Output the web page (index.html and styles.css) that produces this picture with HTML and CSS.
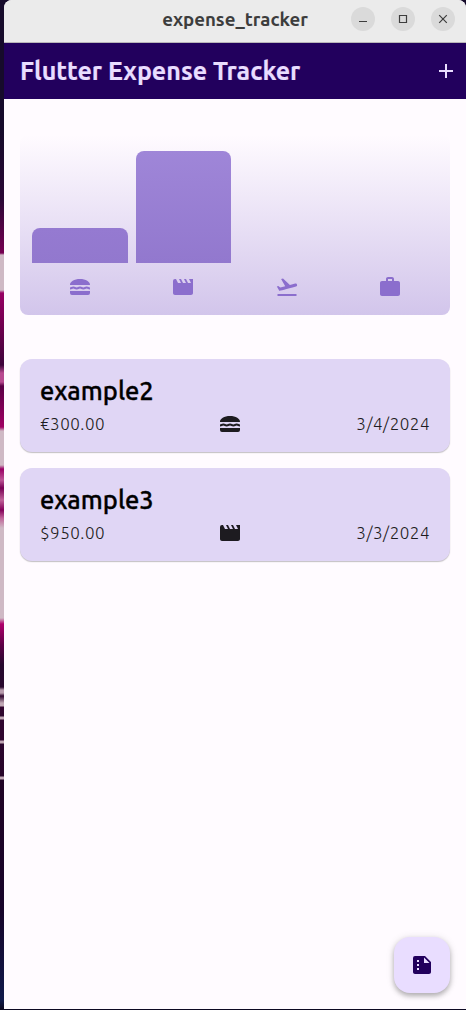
FILE: index.html
```html
<!DOCTYPE html>
<html lang="en">
<head>
<meta charset="utf-8">
<title>expense_tracker</title>
<link rel="stylesheet" href="styles.css">
</head>
<body>
<svg class="symbols" width="0" height="0">
  <symbol id="burger" viewBox="0 0 24 24"><path d="M22 10C22.3 6.7 17.7 4 12 4S1.700 6.700 2 10zM2 16h20v2a2 2 0 0 1-2 2H4a2 2 0 0 1-2-2zM18.660 11.500c-1.950 0-2.090 1-3.330 1-1.190 0-1.420-1-3.330-1-1.950 0-2.090 1-3.330 1-1.190 0-1.420-1-3.330-1-1.950 0-2.100 1-3.340 1v2c1.900 0 2.170-1 3.350-1 1.190 0 1.420 1 3.330 1 1.950 0 2.090-1 3.330-1s1.420 1 3.330 1c1.950 0 2.090-1 3.330-1 1.190 0 1.400.98 3.310 1v-2c-1.220 0-1.400-1-3.320-1z"/></symbol>
  <symbol id="movie" viewBox="0 0 24 24"><path d="M18 4l2 4h-3l-2-4h-2l2 4h-3l-2-4H8l2 4H7L5 4H4a2 2 0 0 0-2 2v12c0 1.100.9 2 2 2h16c1.100 0 2-.9 2-2V4z"/></symbol>
  <symbol id="flight" viewBox="0 0 24 24"><path d="M2.500 19h19v2h-19zm19.570-9.360c-.21-.8-1.040-1.280-1.840-1.060L14.920 10l-6.900-6.430-1.930.51 4.140 7.170-4.970 1.330-1.970-1.540-1.450.39 2.590 4.490s7.120-1.900 16.570-4.430c.81-.23 1.280-1.050 1.070-1.850z"/></symbol>
  <symbol id="work" viewBox="0 0 24 24"><path d="M20 6h-4V4c0-1.110-.89-2-2-2h-4c-1.110 0-2 .89-2 2v2H4c-1.110 0-2 .89-2 2v11c0 1.110.89 2 2 2h16c1.110 0 2-.89 2-2V8c0-1.110-.89-2-2-2zm-6 0h-4V4h4z"/></symbol>
  <symbol id="summary" viewBox="0 0 24 24"><path fill-rule="evenodd" d="M15 3H5a2 2 0 0 0-2 2v14c0 1.100.9 2 2 2h14c1.100 0 2-.9 2-2V9zM7 7h2v2H7zm0 4h2v2H7zm0 4h2v2H7zm7-5V4.500l5.500 5.500z"/></symbol>
</svg>
<div class="window">
  <header class="titlebar">
    <span class="window-name">expense_tracker</span>
    <div class="controls">
      <span class="control"><svg viewBox="0 0 24 24"><path d="M8 14.500h8"/></svg></span>
      <span class="control"><svg viewBox="0 0 24 24"><path d="M8.500 8.500h7v7h-7z"/></svg></span>
      <span class="control"><svg viewBox="0 0 24 24"><path d="M8.200 8.200l7.600 7.600M15.800 8.200l-7.600 7.600"/></svg></span>
    </div>
  </header>
  <div class="appbar">
    <h1 class="app-title">Flutter Expense Tracker</h1>
    <svg class="add" viewBox="0 0 24 24"><path d="M19 13h-6v6h-2v-6H5v-2h6V5h2v6h6z"/></svg>
  </div>
  <main class="content">
    <section class="chart">
      <div class="bars">
        <div class="slot"><div class="bar bar-food"></div></div>
        <div class="slot"><div class="bar bar-leisure"></div></div>
        <div class="slot"></div>
        <div class="slot"></div>
      </div>
      <div class="categories">
        <svg class="icon"><use href="#burger"/></svg>
        <svg class="icon"><use href="#movie"/></svg>
        <svg class="icon"><use href="#flight"/></svg>
        <svg class="icon"><use href="#work"/></svg>
      </div>
    </section>
    <section class="list">
      <article class="card">
        <h2 class="name">example2</h2>
        <div class="details"><span class="amount">€300.00</span><svg class="icon"><use href="#burger"/></svg><span class="date">3/4/2024</span></div>
      </article>
      <article class="card">
        <h2 class="name">example3</h2>
        <div class="details"><span class="amount">$950.00</span><svg class="icon"><use href="#movie"/></svg><span class="date">3/3/2024</span></div>
      </article>
    </section>
  </main>
  <button class="fab"><svg class="icon"><use href="#summary"/></svg></button>
</div>
</body>
</html>
```
FILE: styles.css
```css
* { box-sizing: border-box; }
body {
  margin: 0;
  width: 466px;
  height: 1010px;
  padding: 0 0 1px 4px;
  overflow: hidden;
  font-family: Ubuntu, "Noto Sans", "Open Sans", sans-serif;
  background: linear-gradient(#160b2b 0, #160b2b 130px, #2b0836 200px, #760052 253px, #cfb9c5 255px, #cfb9c5 290px, #970063 293px, #720050 325px, #3d043b 365px, #b84a90 373px, #b84a90 382px, #5a0046 386px, #a00063 427px, #cfb9c5 431px, #cfb9c5 465px, #9a0065 469px, #bd5596 480px, #790055 488px, #c06299 500px, #84005a 510px, #c06299 518px, #cfb9c5 528px, #cfb9c5 618px, #b0006c 624px, #5d0046 645px, #26082e 665px, #29072e 687px, #b89bad 690px, #b89bad 693px, #30052f 696px, #c0a6b4 703px, #c0a6b4 706px, #32042f 707px, #2e062e 716px, #c0a6b4 717px, #c0a6b4 719px, #30052f 720px, #30052f 740px, #c0a6b4 741px, #c0a6b4 743px, #2c052e 744px, #270429 776px, #c0a6b4 777px, #c0a6b4 779px, #210426 780px, #17042a 910px, #101a4b 1000px, #0c0922 1009px);
}
.symbols { position: absolute; }
.window {
  position: relative;
  display: flex;
  flex-direction: column;
  height: 1009px;
  overflow: hidden;
  border-radius: 8px 8px 0 0;
  background: #fffbff;
}
.titlebar {
  display: grid;
  grid-template-columns: 1fr;
  align-items: center;
  flex: none;
  height: 43px;
  padding-bottom: 4px;
  border-bottom: 1px solid #b9b6b9;
  background: #ebebeb;
}
.window-name, .controls { grid-area: 1 / 1; }
.window-name {
  justify-self: center;
  padding-top: 2px;
  color: #3d3d3d;
  font-size: 18.67px;
  font-weight: 700;
  line-height: 24px;
}
.controls { display: flex; justify-content: flex-end; gap: 16px; padding-right: 11px; }
.control { width: 24px; height: 24px; border-radius: 50%; background: #dadada; }
.control svg { display: block; width: 24px; height: 24px; fill: none; stroke: #3d3d3d; stroke-width: 1.2; }
.appbar {
  display: flex;
  align-items: center;
  justify-content: space-between;
  flex: none;
  height: 56px;
  padding: 0 8px 0 16px;
  background: #22005d;
}
.app-title { margin: 0; color: #e9ddff; font-size: 25px; font-weight: 700; line-height: 32px; white-space: nowrap; -webkit-text-stroke: .2px; }
.add { width: 24px; height: 24px; fill: #e9ddff; }
.content { display: flex; flex-direction: column; gap: 44px; padding: 36px 16px 0; }
.chart {
  display: flex;
  flex-direction: column;
  gap: 12px;
  height: 180px;
  padding: 16px 8px;
  border-radius: 8px;
  background: linear-gradient(#fffbff, #d2c5eb);
}
.bars, .categories { display: grid; grid-template-columns: repeat(4, 1fr); }
.bars { height: 112px; }
.slot { display: flex; align-items: flex-end; padding: 0 4px; }
.bar { width: 100%; border-radius: 8px 8px 0 0; }
.bar-food { height: 35.4px; background: linear-gradient(#957ad1, #9278ce); }
.bar-leisure { height: 112px; background: linear-gradient(#9f86d8, #9278ce); }
.icon { display: block; width: 24px; height: 24px; fill: currentColor; }
.categories { justify-items: center; color: #8b6ecd; }
.list { display: flex; flex-direction: column; gap: 16px; }
.card {
  height: 93px;
  padding: 16px 20px;
  border-radius: 12px;
  background: #e0d6f5;
  box-shadow: 0 1px 1px rgba(0, 0, 0, .2), 0 1px 2px rgba(0, 0, 0, .05);
}
.name { margin: 0; color: #000; font-size: 25.5px; font-weight: 500; line-height: 32px; -webkit-text-stroke: .35px; }
.details { display: grid; grid-template-columns: 65px 1fr 75px; align-items: center; margin-top: 5px; color: #1d1b20; }
.details .icon { justify-self: center; }
.amount, .date { font-size: 17px; font-weight: 300; line-height: 24px; letter-spacing: .5px; white-space: nowrap; }
.date { justify-self: end; }
.fab {
  position: absolute;
  right: 16px;
  bottom: 16px;
  display: grid;
  place-items: center;
  width: 56px;
  height: 56px;
  padding: 0;
  border: 0;
  border-radius: 16px;
  color: #22005d;
  background: #e9ddff;
  box-shadow: 0 3px 5px rgba(0, 0, 0, .25), 0 1px 8px rgba(0, 0, 0, .12);
}
```
